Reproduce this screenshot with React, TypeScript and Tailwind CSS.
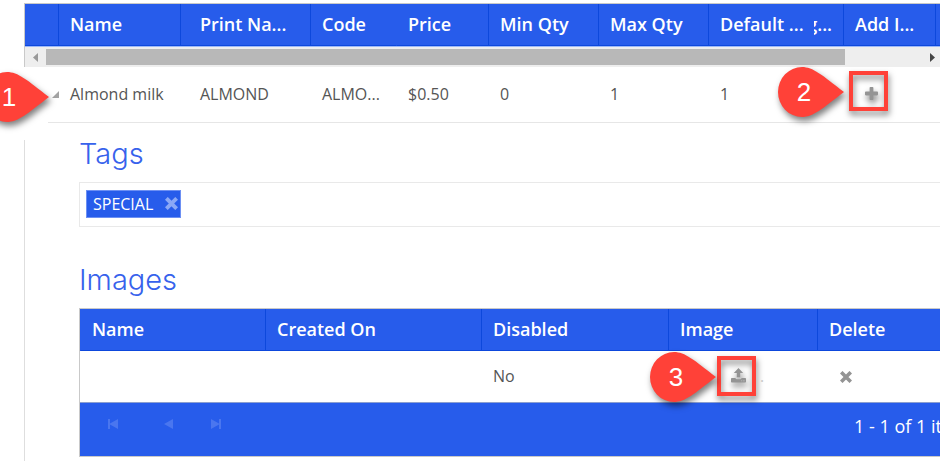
import type { ReactNode } from "react";

interface CalloutProps {
	label: string;
	className: string;
}

interface HighlightProps {
	className: string;
	children: ReactNode;
}

const HEAD_CELL =
	"h-[42px] border-b border-l border-b-[#0d48dc] border-l-[#0d48dc] px-[11px] pb-0.5 text-left font-semibold whitespace-nowrap";
const BODY_CELL = "px-3 pb-0.5 whitespace-nowrap";
const HEADING =
	"mb-3.5 font-[Inter,sans-serif] text-[29px] leading-7 font-light text-[#3762ec]";

function Callout({ label, className }: CalloutProps) {
	return (
		<div
			className={`pointer-events-none absolute z-10 h-[50px] w-[66px] ${className}`}
		>
			<svg
				className="absolute inset-0 drop-shadow-[2px_4px_3px_rgba(0,0,0,0.5)]"
				width={66}
				height={50}
				viewBox="0 0 66 50"
			>
				<path
					d="M24 0C35 0 44 8 66 25C44 42 35 50 24 50A24 25 0 0 1 24 0Z"
					fill="#ff4138"
				/>
			</svg>
			<span className="relative flex h-[50px] w-[52px] items-center justify-center font-['Liberation_Sans',sans-serif] text-[26px] leading-none text-white">
				{label}
			</span>
		</div>
	);
}

function Highlight({ className, children }: HighlightProps) {
	return (
		<button
			className={`flex h-10 w-[39px] items-center justify-center border-4 border-[#ff4138] text-[#949494] drop-shadow-[1px_4px_3px_rgba(0,0,0,0.5)] ${className}`}
		>
			{children}
		</button>
	);
}

function PlusIcon() {
	return (
		<svg width={13} height={13} viewBox="0 0 13 13" fill="currentColor">
			<path d="M5.4 0H7.6Q8.4 0 8.4 0.8V4.6H12.2Q13 4.6 13 5.4V7.6Q13 8.4 12.2 8.4H8.4V12.2Q8.4 13 7.6 13H5.4Q4.6 13 4.6 12.2V8.4H0.8Q0 8.4 0 7.6V5.4Q0 4.6 0.8 4.6H4.6V0.8Q4.6 0 5.4 0Z" />
		</svg>
	);
}

function CloseIcon({ size }: { size: number }) {
	return (
		<svg width={size} height={size} viewBox="0 0 12 12" stroke="currentColor">
			<path d="M2.5 2.5L9.5 9.5M9.5 2.5L2.5 9.5" strokeWidth={3.6} strokeLinecap="square" />
		</svg>
	);
}

function UploadIcon() {
	return (
		<svg width={15} height={15} viewBox="0 0 15 15" fill="currentColor">
			<path d="M7.5 0L12.2 5H9.2V9.2H5.8V5H2.8Z" />
			<path
				d="M0.8 10H4.4Q4.8 11.2 6 11.2H9Q10.2 11.2 10.6 10H14.2Q15 10 15 10.8V13.7Q15 14.5 14.2 14.5H0.8Q0 14.5 0 13.7V10.8Q0 10 0.8 10ZM10.2 12.4V13.2H11.2V12.4ZM12.4 12.4V13.2H13.4V12.4Z"
				fillRule="evenodd"
			/>
		</svg>
	);
}

function ItemColumns({ first }: { first: string }) {
	return (
		<colgroup>
			<col className={first} />
			<col className="w-[122px]" />
			<col className="w-[130px]" />
			<col className="w-[86px]" />
			<col className="w-[92px]" />
			<col className="w-[110px]" />
			<col className="w-[110px]" />
			<col className="w-[135px]" />
			<col className="w-[92px]" />
			<col />
		</colgroup>
	);
}

function ItemGrid() {
	return (
		<section className="relative">
			<div className="ml-6 border-t border-l border-[#c9c9c9]">
				<table className="w-full table-fixed border-separate border-spacing-0 bg-[#275ceb] text-lg leading-6 text-white">
					<ItemColumns first="w-[33px]" />
					<thead>
						<tr>
							<th className="border-b border-[#0d48dc]" aria-label="Expand" />
							<th className={HEAD_CELL}>Name</th>
							<th className={`${HEAD_CELL} pl-[19px]`}>Print Na...</th>
							<th className={HEAD_CELL}>Code</th>
							<th className={`${HEAD_CELL} border-l-transparent`}>Price</th>
							<th className={HEAD_CELL}>Min Qty</th>
							<th className={HEAD_CELL}>Max Qty</th>
							<th className={HEAD_CELL}>
								<div className="flex justify-between">
									<span>Default ...</span>
									<span className="flex w-[18px] justify-end overflow-hidden">g...</span>
								</div>
							</th>
							<th className={HEAD_CELL}>Add I...</th>
							<th className="border-b border-l border-[#0d48dc]" aria-label="More" />
						</tr>
					</thead>
				</table>
				<div className="flex h-[21px] items-center border-t border-[#9db8f8] bg-[#eeeeee]">
					<button
						aria-label="Scroll left"
						className="flex h-5 w-[21px] items-center justify-center text-[#999999]"
					>
						<svg width={5} height={9} viewBox="0 0 5 9" fill="currentColor">
							<path d="M5 0V9L0 4.5Z" />
						</svg>
					</button>
					<div className="flex-1">
						<div className="h-4 w-[91%] bg-[#b8b8b8]" />
					</div>
					<button
						aria-label="Scroll right"
						className="flex h-5 w-4 items-center justify-center text-[#444444]"
					>
						<svg width={5} height={9} viewBox="0 0 5 9" fill="currentColor">
							<path d="M0 0V9L5 4.5Z" />
						</svg>
					</button>
				</div>
			</div>

			<div className="pl-12">
				<table className="w-full table-fixed border-separate border-spacing-0 text-base text-[#555555]">
					<ItemColumns first="w-[10px]" />
					<tbody>
						<tr className="h-14 [&>td]:border-b [&>td]:border-[#e6e6e6]">
							<td>
								<button aria-label="Collapse row" className="ml-1 block text-[#a3a3a3]">
									<svg width={7} height={7} viewBox="0 0 7 7" fill="currentColor">
										<path d="M7 0V7H0Z" />
									</svg>
								</button>
							</td>
							<td className={BODY_CELL}>Almond milk</td>
							<td className={`${BODY_CELL} pl-5`}>ALMOND</td>
							<td className={BODY_CELL}>ALMO...</td>
							<td className={BODY_CELL}>$0.50</td>
							<td className={BODY_CELL}>0</td>
							<td className={BODY_CELL}>1</td>
							<td className={BODY_CELL}>1</td>
							<td>
								<div className="relative -mt-2 pl-1.5">
									<Callout label="2" className="-top-1 -left-[65px]" />
									<Highlight className="pt-1.5 pl-1.5">
										<PlusIcon />
									</Highlight>
								</div>
							</td>
							<td />
						</tr>
					</tbody>
				</table>
			</div>
			<Callout label="1" className="top-[69px] -left-[17px]" />
		</section>
	);
}

function Tags() {
	return (
		<>
			<h2 className={HEADING}>Tags</h2>
			<div className="flex h-[45px] items-center border border-r-0 border-[#e9e9e9] pb-0.5 pl-1.5">
				<span className="flex h-7 items-center gap-3 border border-[#6d90f3] bg-[#275ceb] pr-0.5 pl-1.5 text-base text-white">
					SPECIAL
					<button aria-label="Remove SPECIAL" className="text-[#8ba8f6]">
						<CloseIcon size={13} />
					</button>
				</span>
			</div>
		</>
	);
}

function Images() {
	return (
		<>
			<h2 className={`mt-[39px] ${HEADING}`}>Images</h2>
			<div className="border border-r-0 border-[#c9c9c9]">
				<table className="w-full table-fixed border-separate border-spacing-0 text-base text-[#555555]">
					<colgroup>
						<col className="w-[185px]" />
						<col className="w-[216px]" />
						<col className="w-[187px]" />
						<col className="w-[149px]" />
						<col />
					</colgroup>
					<thead className="bg-[#275ceb] text-lg leading-6 text-white">
						<tr>
							<th className={`${HEAD_CELL} border-l-transparent`}>Name</th>
							<th className={HEAD_CELL}>Created On</th>
							<th className={HEAD_CELL}>Disabled</th>
							<th className={HEAD_CELL}>Image</th>
							<th className={HEAD_CELL}>Delete</th>
						</tr>
					</thead>
					<tbody>
						<tr className="h-[51px]">
							<td />
							<td />
							<td className={BODY_CELL}>No</td>
							<td>
								<div className="relative -mt-0.5 flex items-center gap-1 pl-[49px]">
									<Callout label="3" className="-top-1 -left-[18px]" />
									<Highlight className="pl-1">
										<UploadIcon />
									</Highlight>
									<span className="text-[#d0d0d0]">.</span>
								</div>
							</td>
							<td className="pl-[23px]">
								<button aria-label="Delete image" className="block text-[#949494]">
									<CloseIcon size={12} />
								</button>
							</td>
						</tr>
					</tbody>
				</table>
				<footer className="flex h-[54px] items-center border-t border-[#8b9fd0] bg-[#275ceb] pb-3 text-[#4a76ef]">
					<button disabled aria-label="First page" className="ml-7">
						<svg width={10} height={10} viewBox="0 0 10 10" fill="currentColor">
							<path d="M0 0H2V4.5L10 0V10L2 5.5V10H0Z" />
						</svg>
					</button>
					<button disabled aria-label="Previous page" className="ml-[46px]">
						<svg width={9} height={10} viewBox="0 0 9 10" fill="currentColor">
							<path d="M9 0V10L0 5Z" />
						</svg>
					</button>
					<button disabled aria-label="Last page" className="ml-[38px]">
						<svg width={10} height={10} viewBox="0 0 10 10" fill="currentColor">
							<path d="M10 0H8V4.5L0 0V10L8 5.5V10H10Z" />
						</svg>
					</button>
					<span className="ml-auto w-[86px] overflow-hidden pt-1 text-lg leading-6 whitespace-nowrap text-white">
						1 - 1 of 1 items
					</span>
				</footer>
			</div>
		</>
	);
}

export default function App() {
	return (
		<main className="h-screen overflow-hidden bg-white pt-[3px] pr-1 font-['Open_Sans',sans-serif]">
			<ItemGrid />
			<div className="mt-[17px] ml-6 h-full border-l border-[#dedede] pl-[54px]">
				<Tags />
				<Images />
			</div>
		</main>
	);
}
